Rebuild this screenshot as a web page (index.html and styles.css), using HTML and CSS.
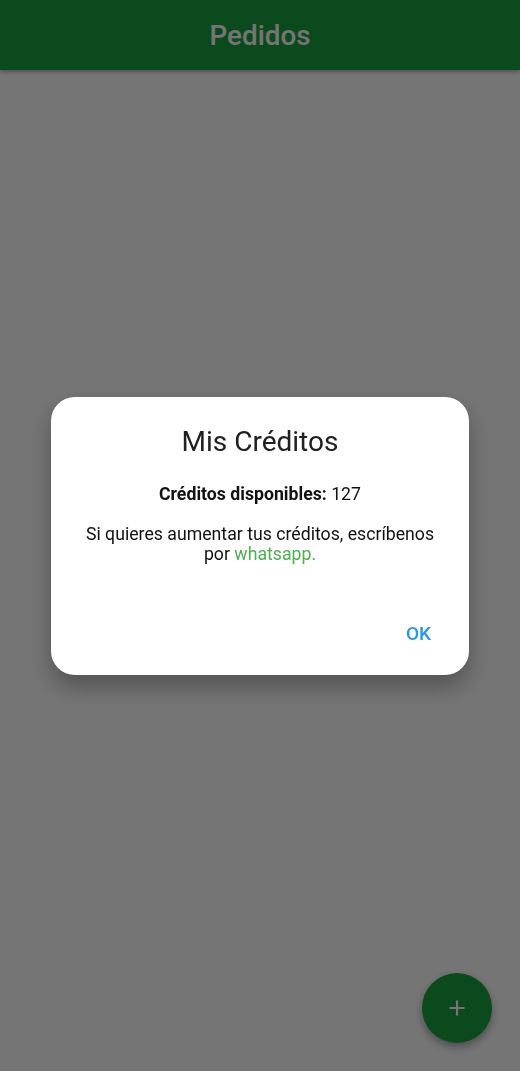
FILE: index.html
```html
<!DOCTYPE html>
<html lang="es">
<head>
<meta charset="utf-8">
<title>Pedidos</title>
<link rel="stylesheet" href="styles.css">
</head>
<body>
<div class="app">
  <header class="appbar"><h1 class="appbar-title">Pedidos</h1></header>
  <main class="content"></main>
  <button class="fab" aria-label="Agregar">
    <svg width="24" height="24" viewBox="0 0 24 24"><path d="M19 13h-6v6h-2v-6H5v-2h6V5h2v6h6v2z" fill="#ffffff"/></svg>
  </button>
</div>
<div class="barrier">
  <div class="dialog" role="dialog">
    <h2 class="dialog-title">Mis Créditos</h2>
    <div class="dialog-body">
      <p class="credits"><b>Créditos disponibles:</b> 127</p>
      <p class="info">Si quieres aumentar tus créditos, escríbenos por <span class="link">whatsapp.</span></p>
    </div>
    <div class="dialog-actions"><button class="btn-ok">OK</button></div>
  </div>
</div>
</body>
</html>
```
FILE: styles.css
```css
* { box-sizing: border-box; }
html, body { margin: 0; padding: 0; height: 100%; }
body {
  font-family: Roboto, "Noto Sans", sans-serif;
  background: #ffffff;
}
.app {
  position: relative;
  height: 1071px;
  display: flex;
  flex-direction: column;
}
.appbar {
  height: 70px;
  background: #1aa13f;
  display: flex;
  align-items: center;
  justify-content: center;
  box-shadow: 0 2px 4px rgba(0,0,0,0.3);
  position: relative;
  z-index: 1;
}
.appbar-title {
  margin: 0;
  color: #ffffff;
  font-size: 27.8px;
  font-weight: 500;
}
.content { flex: 1; }
.fab {
  position: absolute;
  right: 28px;
  bottom: 28px;
  width: 70px;
  height: 70px;
  border-radius: 50%;
  border: none;
  background: #1aa13f;
  display: flex;
  align-items: center;
  justify-content: center;
  box-shadow: 0 4px 8px rgba(0,0,0,0.35);
  padding: 0;
}
.fab svg { width: 26px; height: 26px; }
.barrier {
  position: fixed;
  inset: 0;
  background: rgba(0,0,0,0.54);
  display: flex;
  align-items: center;
  justify-content: center;
  z-index: 10;
}
.dialog {
  width: 418px;
  background: #ffffff;
  border-radius: 24px;
  box-shadow: 0 12px 24px rgba(0,0,0,0.3);
  padding: 28px 24px 22px;
  display: flex;
  flex-direction: column;
}
.dialog-title {
  margin: 0;
  text-align: center;
  font-size: 28px;
  font-weight: 400;
  line-height: 34px;
  color: #202020;
}
.dialog-body {
  margin-top: 25px;
  text-align: center;
  color: #111111;
  font-size: 17.7px;
  line-height: 20px;
}
.dialog-body p { margin: 0; }
.credits b { font-weight: 700; }
.info { margin-top: 20px !important; padding: 0 6px; }
.link { color: #4caf50; }
.dialog-actions {
  display: flex;
  justify-content: flex-end;
  margin-top: 51px;
}
.btn-ok {
  background: none;
  border: none;
  color: #2196f3;
  font-family: Roboto, sans-serif;
  font-size: 19px;
  font-weight: 500;
  padding: 8px 14px;
  line-height: 22px;
}
```
